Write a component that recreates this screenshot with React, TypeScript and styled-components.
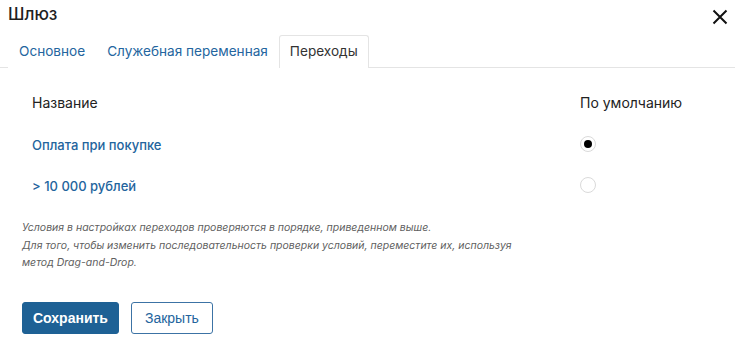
import React from 'react'
import styled, { createGlobalStyle } from 'styled-components'

const GlobalStyle = createGlobalStyle`
  html, body {
    margin: 0;
    padding: 0;
    background: #ffffff;
  }
  body {
    font-family: Inter, "Noto Sans", "Liberation Sans", sans-serif;
    color: #222222;
  }
`

const Dialog = styled.div`
  width: 735px;
  height: 340px;
  overflow: hidden;
  background: #ffffff;
`

const Header = styled.div`
  height: 35px;
  display: flex;
  justify-content: space-between;
  align-items: flex-start;
  padding: 2px 5px 0 8px;
  box-sizing: border-box;
`

const Title = styled.h1`
  margin: 0;
  font-size: 17px;
  line-height: 24px;
  font-weight: 500;
  color: #1f1f1f;
`

const CloseButton = styled.button`
  border: 0;
  background: transparent;
  padding: 0;
  margin-top: 5px;
  width: 20px;
  height: 20px;
  display: flex;
  align-items: center;
  justify-content: center;
  cursor: pointer;
`

const Tabs = styled.div`
  display: flex;
  height: 33px;
  padding-left: 8px;
  border-bottom: 1px solid #e4e4e4;
  box-sizing: border-box;
`

const Tab = styled.div<{ $active?: boolean }>`
  padding: 0 10px;
  font-size: 13.6px;
  line-height: 31px;
  color: ${({ $active }) => ($active ? '#333333' : '#24659e')};
  background: #ffffff;
  border: 1px solid ${({ $active }) => ($active ? '#e4e4e4' : 'transparent')};
  border-bottom: 0;
  border-radius: 3px 3px 0 0;
  margin-bottom: -1px;
  height: 33px;
  box-sizing: border-box;
  cursor: pointer;
`

const Table = styled.div`
  margin-top: 14px;
  padding-left: 32px;
  display: grid;
  grid-template-columns: 548px 1fr;
`

const HeadCell = styled.div`
  height: 41px;
  display: flex;
  align-items: center;
  font-size: 14px;
  color: #222222;
`

const NameCell = styled.div`
  height: 41px;
  display: flex;
  align-items: center;
  padding-top: 2px;
  box-sizing: border-box;
  font-size: 13px;
  font-weight: 500;
  color: #23649d;
`

const RadioCell = styled.div`
  height: 41px;
  display: flex;
  align-items: center;
`

const Radio = styled.span<{ $checked?: boolean }>`
  width: 16px;
  height: 16px;
  border-radius: 50%;
  border: 1px solid #dadada;
  box-sizing: border-box;
  display: flex;
  align-items: center;
  justify-content: center;

  &::after {
    content: '';
    width: 8px;
    height: 8px;
    border-radius: 50%;
    background: ${({ $checked }) => ($checked ? '#000000' : 'transparent')};
  }
`

const Note = styled.p`
  margin: 14px 0 0 22px;
  font-size: 10.5px;
  line-height: 17.5px;
  font-style: italic;
  color: #5f5f5f;
  max-width: 520px;
`

const Actions = styled.div`
  display: flex;
  gap: 12px;
  margin: 30px 0 0 22px;
`

const Button = styled.button<{ $primary?: boolean }>`
  height: 32px;
  padding: 0 ${({ $primary }) => ($primary ? '10px' : '13px')};
  border-radius: 3px;
  font-family: "Liberation Sans", Arial, sans-serif;
  font-size: 14px;
  font-weight: ${({ $primary }) => ($primary ? 600 : 400)};
  border: 1px solid ${({ $primary }) => ($primary ? '#1e6195' : '#3c73a5')};
  background: ${({ $primary }) => ($primary ? '#1e6195' : '#ffffff')};
  color: ${({ $primary }) => ($primary ? '#ffffff' : '#23649d')};
  cursor: pointer;
`

const rows = [
  { name: 'Оплата при покупке', checked: true },
  { name: '> 10 000 рублей', checked: false },
]

const App: React.FC = () => {
  return (
    <>
      <GlobalStyle />
      <Dialog>
        <Header>
          <Title>Шлюз</Title>
          <CloseButton aria-label="Закрыть">
            <svg width="16" height="16" viewBox="0 0 16 16">
              <path d="M1.5 1.5 L14.5 14.5 M14.5 1.5 L1.5 14.5" stroke="#111" strokeWidth="2" fill="none" />
            </svg>
          </CloseButton>
        </Header>
        <Tabs>
          <Tab>Основное</Tab>
          <Tab>Служебная переменная</Tab>
          <Tab $active>Переходы</Tab>
        </Tabs>
        <Table>
          <HeadCell>Название</HeadCell>
          <HeadCell>По умолчанию</HeadCell>
          {rows.map((row) => (
            <React.Fragment key={row.name}>
              <NameCell>{row.name}</NameCell>
              <RadioCell>
                <Radio $checked={row.checked} />
              </RadioCell>
            </React.Fragment>
          ))}
        </Table>
        <Note>
          Условия в настройках переходов проверяются в порядке, приведенном выше.
          <br />
          Для того, чтобы изменить последовательность проверки условий, переместите их, используя
          метод Drag-and-Drop.
        </Note>
        <Actions>
          <Button $primary>Сохранить</Button>
          <Button>Закрыть</Button>
        </Actions>
      </Dialog>
    </>
  )
}

export default App
